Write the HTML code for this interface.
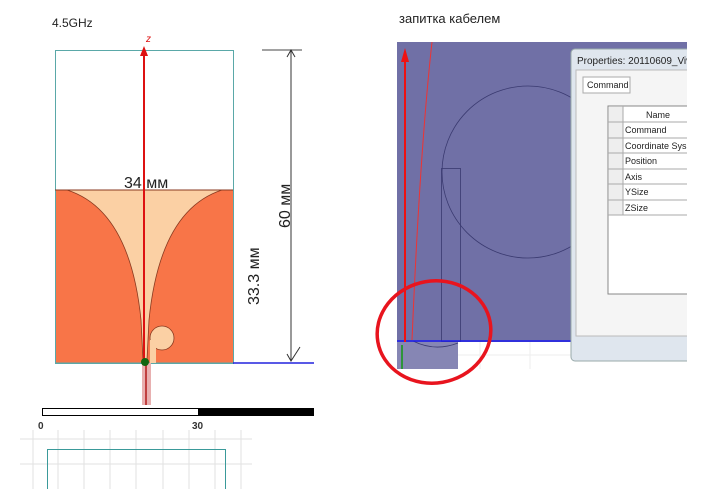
<html><body style="margin:0;width:728px;height:489px;background:#fff;position:relative;overflow:hidden;font-family:'Liberation Sans',sans-serif">
<svg width="728" height="489" style="position:absolute;left:0;top:0" font-family="Liberation Sans, sans-serif">
<defs><clipPath id="c"><rect x="0" y="0" width="687" height="489"/></clipPath></defs>
<text x="52" y="27" font-size="12" fill="#222">4.5GHz</text>
<text x="399" y="23" font-size="13" fill="#222">запитка кабелем</text>
<rect x="55.5" y="50.5" width="178" height="313" fill="#fff" stroke="#5aa8a8"/>
<rect x="55.5" y="190" width="178" height="173" fill="#f87548" stroke="#5aa8a8"/>
<path d="M67 190 Q130 210 141 320 L143 360 L147 360 L149 320 Q160 210 222 190 Z" fill="#fbd0a4" stroke="#8a3a20" stroke-width="0.8"/>
<line x1="55" y1="190" x2="233" y2="190" stroke="#8a3a20"/>
<circle cx="162" cy="338" r="12" fill="#fbd0a4" stroke="#8a3a20" stroke-width="0.8"/>
<rect x="150" y="340" width="6" height="23" fill="#fbd0a4"/>
<line x1="233" y1="363" x2="314" y2="363" stroke="#2222dd" stroke-width="1.5"/>
<rect x="142" y="363" width="9" height="42" fill="#e8b0b0"/>
<line x1="146" y1="363" x2="146" y2="405" stroke="#c04040" stroke-width="2"/>
<line x1="144" y1="50" x2="144" y2="362" stroke="#dd1111" stroke-width="2"/>
<path d="M140 56 L144 46 L148 56 Z" fill="#dd1111"/>
<text x="146" y="42" font-size="10" fill="#dd1111" font-style="italic">z</text>
<circle cx="145" cy="362" r="4" fill="#116611"/>
<text x="124" y="188" font-size="16" fill="#222">34 мм</text>
<line x1="262" y1="50" x2="302" y2="50" stroke="#444"/>
<line x1="291" y1="50" x2="291" y2="361" stroke="#333"/>
<path d="M287 57 L291 50 L295 57 M287 354 L291 361 L300 347" fill="none" stroke="#333"/>
<text transform="translate(290,228) rotate(-90)" font-size="16" fill="#222">60 мм</text>
<text transform="translate(259,305) rotate(-90)" font-size="16" fill="#222">33.3 мм</text>
<rect x="42.5" y="408.5" width="156" height="7" fill="#fff" stroke="#000"/>
<rect x="198" y="408" width="116" height="8" fill="#000"/>
<text x="38" y="429" font-size="10" font-weight="bold" fill="#333">0</text>
<text x="192" y="429" font-size="10" font-weight="bold" fill="#333">30</text>
<g stroke="#e2e2e2"><line x1="20" y1="439" x2="252" y2="439"/><line x1="20" y1="464" x2="252" y2="464"/>
<line x1="33" y1="430" x2="33" y2="489"/><line x1="58" y1="430" x2="58" y2="489"/><line x1="84" y1="430" x2="84" y2="489"/><line x1="110" y1="430" x2="110" y2="489"/><line x1="136" y1="430" x2="136" y2="489"/><line x1="163" y1="430" x2="163" y2="489"/><line x1="189" y1="430" x2="189" y2="489"/><line x1="215" y1="430" x2="215" y2="489"/><line x1="241" y1="430" x2="241" y2="489"/></g>
<path d="M47.5 489 V449.5 H225.5 V489" fill="none" stroke="#3a9a9a"/>
<g clip-path="url(#c)">
<rect x="397" y="42" width="290" height="300" fill="#7070a6"/>
<g stroke="#eee"><line x1="397" y1="355" x2="687" y2="355"/><line x1="430" y1="342" x2="430" y2="369"/><line x1="480" y1="342" x2="480" y2="369"/><line x1="530" y1="342" x2="530" y2="369"/></g>
<circle cx="528" cy="172" r="86" fill="none" stroke="#3a3a70" stroke-width="0.8"/>
<rect x="441.5" y="168.5" width="19" height="173" fill="none" stroke="#3a3a70" stroke-width="0.8"/>
<path d="M397 342 H458 V369 H397 Z" fill="#8686b4"/>
<path d="M413 341 Q435 352 458 343" fill="none" stroke="#3a3a70" stroke-width="0.8"/>
<line x1="397" y1="341" x2="571" y2="341" stroke="#1a1aee" stroke-width="1.5"/>
<line x1="405" y1="60" x2="405" y2="342" stroke="#ee1111" stroke-width="2"/>
<path d="M401 62 L405 48 L409 62 Z" fill="#ee1111"/>
<path d="M432 42 Q420 150 412 340" fill="none" stroke="#ee3333" stroke-width="1"/>
<line x1="402" y1="345" x2="402" y2="369" stroke="#119911" stroke-width="1.5"/>
<rect x="571" y="49" width="130" height="312" rx="4" fill="#dfe6ee" stroke="#9aa"/>
<text x="577" y="64" font-size="10" fill="#222">Properties: 20110609_Vival</text>
<rect x="576" y="70" width="130" height="266" fill="#f5f5f5" stroke="#bbb"/>
<rect x="583" y="77" width="47" height="16" fill="#fff" stroke="#aaa"/>
<text x="587" y="88" font-size="9" fill="#222">Command</text>
<rect x="608" y="106" width="90" height="188" fill="#fff" stroke="#888"/>
<rect x="609" y="107" width="14" height="108" fill="#eee"/>
<g stroke="#aaa"><line x1="623" y1="106" x2="623" y2="215"/>
<line x1="608" y1="122" x2="698" y2="122"/><line x1="608" y1="138" x2="698" y2="138"/><line x1="608" y1="153" x2="698" y2="153"/><line x1="608" y1="169" x2="698" y2="169"/><line x1="608" y1="184" x2="698" y2="184"/><line x1="608" y1="200" x2="698" y2="200"/><line x1="608" y1="215" x2="698" y2="215"/></g>
<g font-size="9" fill="#222"><text x="646" y="118">Name</text><text x="625" y="133">Command</text><text x="625" y="149">Coordinate Sys...</text><text x="625" y="164">Position</text><text x="625" y="180">Axis</text><text x="625" y="195">YSize</text><text x="625" y="211">ZSize</text></g>
</g>
<ellipse cx="434" cy="332" rx="57" ry="51" fill="none" stroke="#e8141e" stroke-width="3.5" transform="rotate(-10 434 332)"/>
</svg>
</body></html>
